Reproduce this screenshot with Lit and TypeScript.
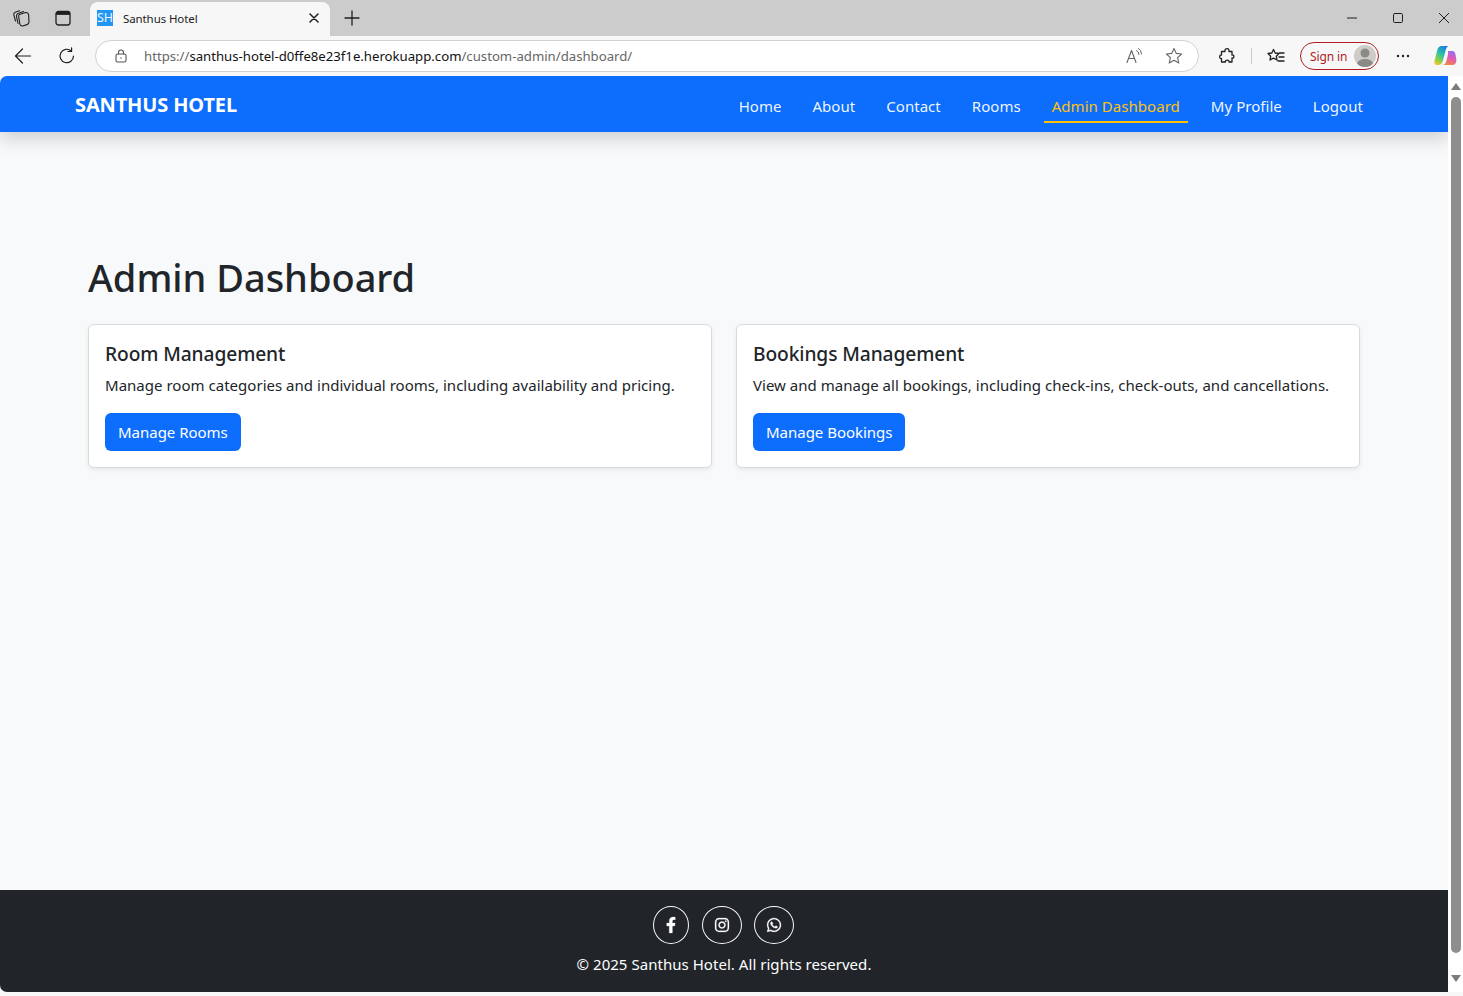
import { LitElement, html, css, svg } from "lit";
import { customElement } from "lit/decorators.js";

const FB = "M279.14 288l14.22-92.66h-88.91v-60.13c0-25.35 12.42-50.06 52.24-50.06h40.42V6.26S260.43 0 225.36 0c-73.22 0-121.08 44.38-121.08 124.72v70.62H22.89V288h81.39v224h100.17V288z";
const IG = "M224.1 141c-63.6 0-114.9 51.3-114.9 114.9s51.3 114.9 114.9 114.9S339 319.5 339 255.9 287.7 141 224.1 141zm0 189.6c-41.1 0-74.7-33.5-74.7-74.7s33.5-74.7 74.7-74.7 74.7 33.5 74.7 74.7-33.6 74.7-74.7 74.7zm146.4-194.3c0 14.9-12 26.8-26.8 26.8-14.9 0-26.8-12-26.8-26.8s12-26.8 26.8-26.8 26.8 12 26.8 26.8zm76.1 27.2c-1.7-35.9-9.9-67.7-36.2-93.9-26.2-26.2-58-34.4-93.9-36.2-37-2.1-147.9-2.1-184.9 0-35.8 1.7-67.6 9.9-93.9 36.1s-34.4 58-36.2 93.9c-2.1 37-2.1 147.9 0 184.9 1.7 35.9 9.9 67.7 36.2 93.9s58 34.4 93.9 36.2c37 2.1 147.9 2.1 184.9 0 35.9-1.7 67.7-9.9 93.9-36.2 26.2-26.2 34.4-58 36.2-93.9 2.1-37 2.1-147.8 0-184.8zM398.8 388c-7.8 19.6-22.9 34.7-42.6 42.6-29.5 11.7-99.5 9-132.1 9s-102.7 2.6-132.1-9c-19.6-7.8-34.7-22.9-42.6-42.6-11.7-29.5-9-99.5-9-132.1s-2.6-102.7 9-132.1c7.8-19.6 22.9-34.7 42.6-42.6 29.5-11.7 99.5-9 132.1-9s102.7-2.6 132.1 9c19.6 7.8 34.7 22.9 42.6 42.6 11.7 29.5 9 99.5 9 132.1s2.7 102.7-9 132.1z";
const WA = "M380.9 97.1C339 55.1 283.2 32 223.9 32c-122.4 0-222 99.6-222 222 0 39.1 10.2 77.3 29.6 111L0 480l117.7-30.9c32.4 17.7 68.9 27 106.1 27h.1c122.3 0 224.1-99.6 224.1-222 0-59.3-25.2-115-67.1-157zm-157 341.6c-33.2 0-65.7-8.9-94-25.7l-6.7-4-69.8 18.3L72 359.2l-4.4-7c-18.5-29.4-28.2-63.3-28.2-98.2 0-101.7 82.8-184.5 184.6-184.5 49.3 0 95.6 19.2 130.4 54.1 34.8 34.9 56.2 81.2 56.1 130.5 0 101.8-84.9 184.6-186.6 184.6zm101.2-138.2c-5.5-2.8-32.8-16.2-37.9-18-5.1-1.9-8.8-2.8-12.5 2.8-3.7 5.6-14.3 18-17.6 21.8-3.2 3.7-6.5 4.2-12 1.4-32.6-16.3-54-29.1-75.5-66-5.7-9.8 5.7-9.1 16.3-30.3 1.8-3.7.9-6.9-.5-9.7-1.4-2.8-12.5-30.1-17.1-41.2-4.5-10.8-9.1-9.3-12.5-9.5-3.2-.2-6.9-.2-10.6-.2-3.7 0-9.7 1.4-14.8 6.9-5.1 5.6-19.4 19-19.4 46.3 0 27.3 19.9 53.7 22.6 57.4 2.8 3.7 39.1 59.7 94.8 83.8 35.2 15.2 49 16.5 66.6 13.9 10.7-1.6 32.8-13.4 37.4-26.4 4.6-13 4.6-24.1 3.2-26.4-1.3-2.5-5-3.9-10.5-6.6z";

const ico = (w: number, body: unknown, vb = "0 0 20 20") =>
  html`<svg class="ico" width=${w} height=${w} viewBox=${vb} fill="none" stroke="#1f1f1f" stroke-width="1.1" stroke-linecap="round" stroke-linejoin="round">${body}</svg>`;

@customElement("app-root")
export class AppRoot extends LitElement {
  static styles = css`
    :host { display: block; height: 996px; overflow: hidden; background: #fff; font-family: "Noto Sans", "Open Sans", sans-serif; color: #212529; }
    * { box-sizing: border-box; }
    .ico { display: block; flex: none; }
    .tabstrip { height: 36px; background: #ccc; display: flex; align-items: flex-end; }
    .strip-btn { width: 44px; height: 36px; display: flex; align-items: center; justify-content: center; flex: none; }
    .strip-l { width: 90px; display: flex; margin-left: -1px; margin-right: 1px; }
    .strip-b2 { margin-left: -2px; }
    .tab { width: 240px; height: 34px; background: #f7f7f7; border-radius: 8px 8px 0 0; display: flex; align-items: center; padding: 0 11px 2px 7px; }
    .fav { width: 16px; height: 16px; background: #2196f3; color: #e8f4ff; font-size: 12.5px; line-height: 16px; text-align: center; flex: none; letter-spacing: -0.1px; }
    .tab-title { font-size: 11.5px; margin-left: 10px; color: #222; flex: 1; letter-spacing: -0.1px; }
    .wctl { margin-left: auto; margin-right: -4px; display: flex; }
    .wbtn { width: 46px; height: 36px; display: flex; align-items: center; justify-content: center; }
    .toolbar { height: 40px; background: #f7f7f7; display: flex; align-items: center; padding-left: 1px; }
    .nav-btn { width: 44px; display: flex; justify-content: center; flex: none; }
    .omni { width: 1104px; height: 32px; margin-left: 6px; background: #fff; border: 1px solid #d2d2d2; border-radius: 16px; display: flex; align-items: center; padding: 0 14px 0 18px; flex: none; }
    .url { font-size: 13.2px; margin-left: 16px; color: #666; flex: 1; white-space: nowrap; letter-spacing: -0.01px; }
    .url b { font-weight: 400; color: #111; }
    .read { margin-right: 21px; }
    .tool-r { display: flex; align-items: center; flex: 1; }
    .t-ext { margin-left: 19px; }
    .t-more { margin-left: 17px; }
    .t-copilot { margin-left: 23px; }
    .sep { width: 1px; height: 16px; background: #c8c8c8; margin: 0 15px; }
    .signin { width: 79px; height: 28px; border: 1px solid #b01e23; border-radius: 14px; display: flex; align-items: center; padding: 0 2px 0 9px; color: #b01e23; font-size: 12px; justify-content: space-between; margin-left: 15px; flex: none; background: #f7f7f7; letter-spacing: -0.1px; }
    .avatar { width: 22px; height: 22px; border-radius: 50%; background: #cfccc8; overflow: hidden; }
    .body { height: 916px; display: flex; background: #f7f7f7; }
    .page { width: 1448px; display: flex; flex-direction: column; background: #f8f9fa; border-radius: 7px 0 0 7px; overflow: hidden; }
    .navbar { height: 56px; background: #0d6efd; box-shadow: 0 8px 16px rgba(0, 0, 0, 0.15); display: flex; align-items: center; padding: 0 77px 0 75px; position: relative; flex: none; }
    .brand { color: #fff; font-size: 20px; font-weight: 700; letter-spacing: -0.14px; }
    .links { margin-left: auto; display: flex; gap: 15px; }
    .link { color: rgba(255, 255, 255, 0.95); font-size: 15px; padding: 0 8px; height: 34px; line-height: 34px; border-bottom: 2px solid transparent; margin-top: 3px; white-space: nowrap; letter-spacing: 0.04px; }
    .link.active { color: #ffc107; border-bottom-color: #ffc107; }
    .main { flex: 1; padding: 119px 88px 0; }
    h1 { margin: 0 0 21px; font-size: 38px; line-height: 52px; font-weight: 500; letter-spacing: -0.03px; }
    .cards { display: grid; grid-template-columns: 1fr 1fr; gap: 24px; }
    .card { height: 144px; background: #fff; border: 1px solid #d9dadb; border-radius: 6px; box-shadow: 0 2px 4px rgba(0, 0, 0, 0.075); padding: 16px; }
    h5 { margin: 0; font-size: 19.2px; line-height: 26px; font-weight: 500; letter-spacing: -0.1px; }
    p { margin: 6px 0 0; font-size: 15px; line-height: 24px; white-space: nowrap; letter-spacing: 0.02px; }
    .btn { display: inline-block; margin-top: 16px; height: 38px; line-height: 38px; background: #0d6efd; color: #fff; padding: 0 13px; font-size: 15px; border-radius: 6px; letter-spacing: -0.02px; }
    .footer { height: 102px; background: #212529; color: #fff; flex: none; padding-top: 16px; text-align: center; }
    .socials { display: flex; justify-content: center; gap: 12.5px; padding-right: 1px; }
    .soc { height: 38px; border: 1px solid #f8f9fa; border-radius: 50%; display: flex; align-items: center; justify-content: center; padding: 0 12px; }
    .soc svg { height: 16px; display: block; fill: #fff; stroke: #fff; stroke-width: 8; overflow: visible; }
    .w10 { width: 10px; }
    .w14 { width: 14px; }
    .copy { font-size: 15px; line-height: 24px; margin-top: 8px; letter-spacing: 0.04px; }
    .sb { width: 15px; background: #fff; display: flex; flex-direction: column; align-items: center; padding-top: 7px; flex: none; }
    .up { width: 0; height: 0; border: 5px solid transparent; border-top: 0; border-bottom: 7px solid #7c7c7c; }
    .thumb { width: 10px; height: 856px; border-radius: 5px; background: #8e8e8e; margin-top: 7px; }
    .down { width: 0; height: 0; border: 5px solid transparent; border-bottom: 0; border-top: 7px solid #7c7c7c; margin-top: 22px; }
    .bottom { height: 4px; background: #f7f7f7; }
  `;

  render() {
    const links = ["Home", "About", "Contact", "Rooms", "Admin Dashboard", "My Profile", "Logout"];
    return html`
      <div class="tabstrip">
        <div class="strip-l">
          <div class="strip-btn">${ico(20, svg`<path d="M8.3 6.6 L14.5 4.6 Q17.2 4.2 17.6 6.6 L18 14 Q18 16 16 16.6 L11.6 18 Q9.5 18.2 8.9 16.2 L7.7 8.8 Q7.5 7 8.3 6.6Z"/><path d="M7 15.5 L5.5 8.6 Q5.2 6.2 7 5.4 L12.5 3.6"/><path d="M4.5 13 L2.8 6.8 Q2.5 5 4.2 4.2 L8.5 2.7"/>`)}</div>
          <div class="strip-btn strip-b2">${ico(16, svg`<rect x="1" y="1.5" width="14" height="13.5" rx="2.5" stroke-width="1.3"/><path d="M1.5 2.5 Q1.5 1.5 3.5 1.5 H12.5 Q14.5 1.5 14.5 2.5 V4.5 H1.5Z" fill="#1f1f1f" stroke-width="0.8"/>`, "0 0 16 16")}</div>
        </div>
        <div class="tab">
          <div class="fav">SH</div>
          <div class="tab-title">Santhus Hotel</div>
          ${ico(10, svg`<path d="M1 1 L9 9 M9 1 L1 9" stroke-width="1.5"/>`, "0 0 10 10")}
        </div>
        <div class="strip-btn">${ico(16, svg`<path d="M8 1 V15 M1 8 H15" stroke-width="1.3"/>`, "0 0 16 16")}</div>
        <div class="wctl">
          <div class="wbtn">${ico(10, svg`<path d="M0 5 H10" stroke-width="1"/>`, "0 0 10 10")}</div>
          <div class="wbtn">${ico(10, svg`<rect x="0.5" y="0.5" width="9" height="9" rx="1.2" stroke-width="1"/>`, "0 0 10 10")}</div>
          <div class="wbtn">${ico(10, svg`<path d="M0 0 L10 10 M10 0 L0 10" stroke-width="1"/>`, "0 0 10 10")}</div>
        </div>
      </div>
      <div class="toolbar">
        <div class="nav-btn">${ico(18, svg`<path d="M16.5 9 H1.5 M8.5 2 L1.5 9 L8.5 16" stroke-width="1.2"/>`, "0 0 18 18")}</div>
        <div class="nav-btn">${ico(18, svg`<path d="M15.5 9 A6.7 6.7 0 1 1 13.3 4 M13.6 0.8 V4.5 H9.9" stroke-width="1.2"/>`, "0 0 18 18")}</div>
        <div class="omni">
          ${ico(14, svg`<rect x="2" y="5" width="10" height="8" rx="1.5" stroke="#555"/><path d="M4.5 5 V3.5 A2.5 2.5 0 0 1 9.5 3.5 V5" stroke="#555"/><circle cx="7" cy="9" r="0.7" fill="#555" stroke="none"/>`, "0 0 14 14")}
          <div class="url">https://<b>santhus-hotel-d0ffe8e23f1e.herokuapp.com</b>/custom-admin/dashboard/</div>
          <div class="read">${ico(18, svg`<path d="M2 15.5 L6.5 3.5 L11 15.5 M3.6 11.5 H9.4" stroke="#666"/><path d="M11.5 3.5 Q14 4.5 14 7.5 M13.5 1.5 Q16.5 3 16.5 7" stroke="#666" stroke-width="1"/>`, "0 0 18 18")}</div>
          ${ico(20, svg`<path d="M10 2.5 L12.3 7.4 L17.6 8 L13.6 11.6 L14.8 17 L10 14.2 L5.2 17 L6.4 11.6 L2.4 8 L7.7 7.4 Z" stroke="#666"/>`)}
        </div>
        <div class="tool-r">
          <div class="t-ext">${ico(18, svg`<path d="M7 3.2 C7 1.2 11 1.2 11 3.2 V4.5 H14 V8 C16.5 7.5 16.5 11.5 14 11 V15 H11 C11.5 12.5 7 12.5 7.5 15 H3.5 V11.5 C1 12 1 7.5 3.5 8 V4.5 H7 Z" stroke-width="1.3"/>`, "0 0 18 18")}</div>
          <div class="sep"></div>
          <div>${ico(18, svg`<path d="M6.5 2.5 L8.2 6 L12 6.5 L9.3 9.2 L10 13 L6.5 11.2 L3 13 L3.7 9.2 L1 6.5 L4.8 6 Z M12.5 6 H17 M12 10 H17 M11 14 H17" stroke-width="1.3"/>`, "0 0 18 18")}</div>
          <div class="signin">
            <span>Sign in</span>
            <div class="avatar"><svg width="22" height="22" viewBox="0 0 22 22"><circle cx="11" cy="8" r="4.5" fill="#8c8a87"/><ellipse cx="11" cy="19" rx="8" ry="5" fill="#8c8a87"/></svg></div>
          </div>
          <div class="t-more">${ico(14, svg`<circle cx="2" cy="7" r="1.2" fill="#1f1f1f" stroke="none"/><circle cx="7" cy="7" r="1.2" fill="#1f1f1f" stroke="none"/><circle cx="12" cy="7" r="1.2" fill="#1f1f1f" stroke="none"/>`, "0 0 14 14")}</div>
          <div class="t-copilot"><svg class="ico" width="24" height="22" viewBox="0 0 24 22"><defs><linearGradient id="cp1" x1="0.7" y1="0" x2="0.2" y2="1"><stop offset="0" stop-color="#1a7fe0"/><stop offset="0.45" stop-color="#2fc4a0"/><stop offset="0.8" stop-color="#9ad03c"/><stop offset="1" stop-color="#f6c52d"/></linearGradient><linearGradient id="cp2" x1="0.7" y1="0" x2="0.3" y2="1"><stop offset="0" stop-color="#9a6cf0"/><stop offset="0.5" stop-color="#e25bb0"/><stop offset="1" stop-color="#f08a3a"/></linearGradient></defs><path d="M8 1 H15.5 Q13.8 1.5 13 4 L9.8 16 Q8.6 20 5 20 H4 Q0.6 19.8 1.5 16 L4 6 Q5 1.5 8 1Z" fill="url(#cp1)"/><path d="M15 6 H19.5 Q22 6 22.6 10 L23.4 15 Q23.4 20 19 20 H10 Q12.5 19.5 13.4 16 L15 9.5 Q15.2 7 15 6Z" fill="url(#cp2)"/></svg></div>
        </div>
      </div>
      <div class="body">
        <div class="page">
          <nav class="navbar">
            <div class="brand">SANTHUS HOTEL</div>
            <div class="links">
              ${links.map((l) => html`<div class="link ${l === "Admin Dashboard" ? "active" : ""}">${l}</div>`)}
            </div>
          </nav>
          <div class="main">
            <h1>Admin Dashboard</h1>
            <div class="cards">
              <div class="card">
                <h5>Room Management</h5>
                <p>Manage room categories and individual rooms, including availability and pricing.</p>
                <div class="btn">Manage Rooms</div>
              </div>
              <div class="card">
                <h5>Bookings Management</h5>
                <p>View and manage all bookings, including check-ins, check-outs, and cancellations.</p>
                <div class="btn">Manage Bookings</div>
              </div>
            </div>
          </div>
          <footer class="footer">
            <div class="socials">
              <div class="soc"><svg class="w10" viewBox="0 0 320 512"><path d=${FB}/></svg></div>
              <div class="soc"><svg class="w14" viewBox="0 0 448 512"><path d=${IG}/></svg></div>
              <div class="soc"><svg class="w14" viewBox="0 0 448 512"><path d=${WA}/></svg></div>
            </div>
            <div class="copy">© 2025 Santhus Hotel. All rights reserved.</div>
          </footer>
        </div>
        <div class="sb"><div class="up"></div><div class="thumb"></div><div class="down"></div></div>
      </div>
      <div class="bottom"></div>
    `;
  }
}
